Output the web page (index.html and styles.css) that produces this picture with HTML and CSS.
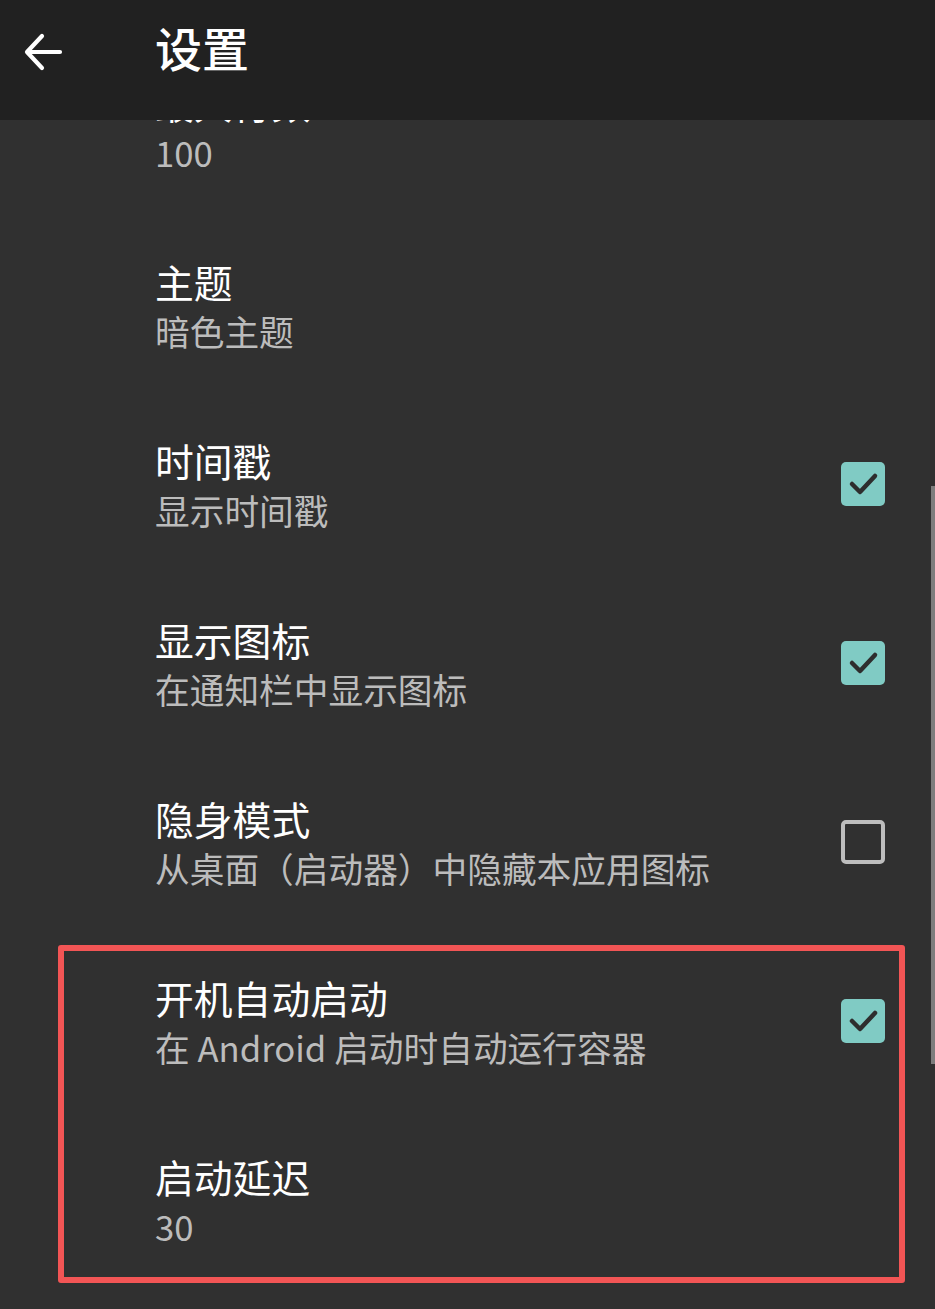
FILE: index.html
```html
<!DOCTYPE html>
<html lang="zh-CN">
<head>
<meta charset="utf-8">
<title>设置</title>
<link rel="stylesheet" href="styles.css">
</head>
<body>
<div class="screen">
  <header class="appbar">
    <svg class="back" width="44" height="44" viewBox="0 0 44 44" aria-hidden="true">
      <path d="M38 22 H6 M20 6 L5 22 L20 38" fill="none" stroke="#fff" stroke-width="4.2" stroke-linecap="round" stroke-linejoin="round"/>
    </svg>
    <h1 class="title">设置</h1>
  </header>
  <main class="viewport">
    <div class="list">
      <div class="item">
        <div class="text"><div class="item-title">最大行数</div><div class="item-sub">100</div></div>
      </div>
      <div class="item">
        <div class="text"><div class="item-title">主题</div><div class="item-sub">暗色主题</div></div>
      </div>
      <div class="item">
        <div class="text"><div class="item-title">时间戳</div><div class="item-sub">显示时间戳</div></div>
        <span class="check on"><svg viewBox="0 0 44 44"><path d="M11 22 L19 30 L34 14" fill="none" stroke="#2e2e2e" stroke-width="4.5" stroke-linecap="round" stroke-linejoin="round"/></svg></span>
      </div>
      <div class="item">
        <div class="text"><div class="item-title">显示图标</div><div class="item-sub">在通知栏中显示图标</div></div>
        <span class="check on"><svg viewBox="0 0 44 44"><path d="M11 22 L19 30 L34 14" fill="none" stroke="#2e2e2e" stroke-width="4.5" stroke-linecap="round" stroke-linejoin="round"/></svg></span>
      </div>
      <div class="item">
        <div class="text"><div class="item-title">隐身模式</div><div class="item-sub">从桌面（启动器）中隐藏本应用图标</div></div>
        <span class="check off"></span>
      </div>
      <div class="group">
        <div class="item">
          <div class="text"><div class="item-title">开机自动启动</div><div class="item-sub">在 Android 启动时自动运行容器</div></div>
          <span class="check on"><svg viewBox="0 0 44 44"><path d="M11 22 L19 30 L34 14" fill="none" stroke="#2e2e2e" stroke-width="4.5" stroke-linecap="round" stroke-linejoin="round"/></svg></span>
        </div>
        <div class="item">
          <div class="text"><div class="item-title">启动延迟</div><div class="item-sub">30</div></div>
        </div>
        <div class="highlight"></div>
      </div>
    </div>
    <div class="scrollbar"></div>
  </main>
</div>
</body>
</html>
```
FILE: styles.css
```css
html, body {
  margin: 0;
  padding: 0;
  background: #303030;
}
body {
  font-family: "Noto Sans CJK SC", "Noto Sans", sans-serif;
  color: #fff;
}
.screen {
  width: 935px;
  height: 1309px;
  overflow: hidden;
  display: flex;
  flex-direction: column;
  background: #303030;
}
.appbar {
  flex: none;
  height: 120px;
  background: #212121;
  display: flex;
  align-items: center;
  box-sizing: border-box;
  padding: 0 0 17px 22px;
}
.back {
  display: block;
  flex: none;
}
.title {
  margin: -10px 0 0 89px;
  font-size: 47px;
  font-weight: 500;
  line-height: 1;
  letter-spacing: 0;
}
.viewport {
  flex: 1;
  position: relative;
  overflow: hidden;
}
.list {
  margin-top: -81px;
}
.item {
  display: flex;
  align-items: center;
  height: 179px;
  box-sizing: border-box;
  padding: 0 50px 0 155px;
}
.text {
  flex: 1;
  min-width: 0;
}
.item-title {
  font-size: 38.8px;
  line-height: 50px;
  color: #ffffff;
  margin-top: -3px;
}
.item-sub {
  font-size: 34.7px;
  line-height: 50px;
  color: #bcbcbc;
}
.check {
  flex: none;
  width: 44px;
  height: 44px;
  box-sizing: border-box;
  border-radius: 5px;
  margin-top: -6px;
}
.check svg {
  display: block;
  width: 44px;
  height: 44px;
}
.check.on {
  background: #80cbc4;
}
.check.off {
  border: 4px solid #bdbdbd;
}
.group {
  position: relative;
}
.highlight {
  position: absolute;
  left: 58px;
  top: 11px;
  width: 847px;
  height: 338px;
  box-sizing: border-box;
  border: 6.5px solid #f25555;
  border-radius: 3px;
  pointer-events: none;
}
.scrollbar {
  position: absolute;
  right: 0;
  top: 366px;
  width: 4px;
  height: 578px;
  background: #7d7d7d;
}
```
